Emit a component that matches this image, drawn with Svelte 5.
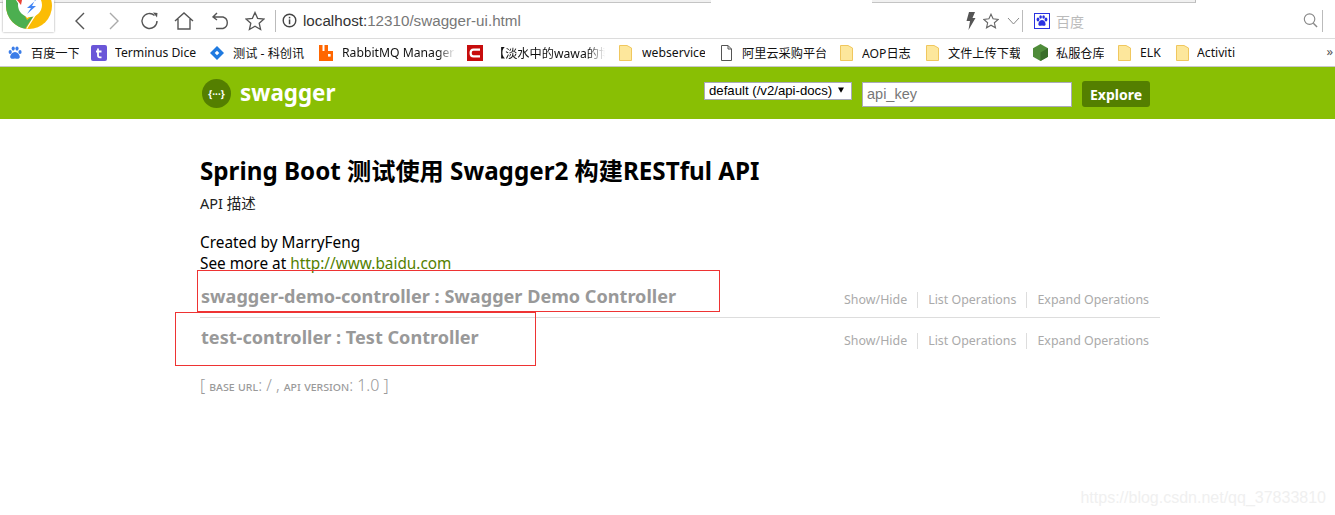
<script>
  const tabs = [225, 162, 159, 165, 161, 161, 162];
  const marks = [
    { t: '百度一下', w: 'baidu', gap: 9, tw: 48, mr: 12 },
    { t: 'Terminus Dice', w: 'term', gap: 8, tw: 82, mr: 12 },
    { t: '测试 - 科创讯', w: 'jira', gap: 8, tw: 73, mr: 12 },
    { t: 'RabbitMQ Manager', w: 'rabbit', gap: 8, tw: 113, mr: 12, fade: true },
    { t: '【淡水中的wawa的博', w: 'red', gap: 10, tw: 112, mr: 14, fade: true },
    { t: 'webservice', w: 'folder', gap: 10, tw: 63, mr: 16 },
    { t: '阿里云采购平台', w: 'page', gap: 10, tw: 84, mr: 14 },
    { t: 'AOP日志', w: 'folder', gap: 9, tw: 50, mr: 14 },
    { t: '文件上传下载', w: 'folder', gap: 9, tw: 72, mr: 13 },
    { t: '私服仓库', w: 'cube', gap: 8, tw: 48, mr: 14 },
    { t: 'ELK', w: 'folder', gap: 9, tw: 21, mr: 15 },
    { t: 'Activiti', w: 'folder', gap: 8, tw: 40, mr: 0 }
  ];
  const ctrls = [
    { name: 'swagger-demo-controller', desc: 'Swagger Demo Controller', line: true },
    { name: 'test-controller', desc: 'Test Controller', line: false }
  ];
</script>

<div class="page">
  <div class="tabstrip">
    {#each tabs as w, i}
      <div class="tab" class:active={i === 4} style="width:{w}px"></div>
    {/each}
  </div>

  <div class="toolbar">
    <svg class="nav first" width="16" height="20" viewBox="0 0 16 20"><path d="M12 2 L4 10 L12 18" fill="none" stroke="#555" stroke-width="1.4"/></svg>
    <svg class="nav" width="16" height="20" viewBox="0 0 16 20"><path d="M4 2 L12 10 L4 18" fill="none" stroke="#aaa" stroke-width="1.4"/></svg>
    <svg class="nav" width="20" height="20" viewBox="0 0 20 20"><path d="M17 10 A7.5 7.5 0 1 1 14.5 4.4" fill="none" stroke="#555" stroke-width="1.4"/><path d="M13 1.5 L17.5 2 L17 6.5 Z" fill="#555"/></svg>
    <svg class="nav home" width="20" height="20" viewBox="0 0 20 20"><path d="M1 10 L10 2 L19 10 M4 8 V18 H16 V8" fill="none" stroke="#555" stroke-width="1.4"/></svg>
    <svg class="nav undo" width="20" height="20" viewBox="0 0 20 20"><path d="M6 2 L2 6 L6 9 M2 6 H12 A6 6 0 0 1 12 17.5 H5" fill="none" stroke="#555" stroke-width="1.4"/></svg>
    <svg class="nav home" width="20" height="20" viewBox="0 0 20 20"><path d="M10 1.5 L12.6 7.3 L19 8 L14.2 12.2 L15.6 18.5 L10 15.2 L4.4 18.5 L5.8 12.2 L1 8 L7.4 7.3 Z" fill="none" stroke="#555" stroke-width="1.3"/></svg>
    <span class="vline"></span>
    <svg class="info" width="15" height="15" viewBox="0 0 15 15"><circle cx="7.5" cy="7.5" r="6.3" fill="none" stroke="#444" stroke-width="1.4"/><rect x="6.8" y="6.4" width="1.5" height="4.8" fill="#444"/><rect x="6.8" y="3.8" width="1.5" height="1.6" fill="#444"/></svg>
    <span class="url"><span class="host">localhost:</span>12310/swagger-ui.html</span>
    <svg width="10" height="20" viewBox="0 0 10 20"><path d="M3 1 H9 L6.5 7 H9.5 L2.5 19 L4 10 H0.5 Z" fill="#555"/></svg>
    <svg class="star" width="16" height="16" viewBox="0 0 20 20"><path d="M10 1.5 L12.6 7.3 L19 8 L14.2 12.2 L15.6 18.5 L10 15.2 L4.4 18.5 L5.8 12.2 L1 8 L7.4 7.3 Z" fill="none" stroke="#666" stroke-width="1.4"/></svg>
    <svg class="chev" width="13" height="8" viewBox="0 0 13 8"><path d="M1 1 L6.5 7 L12 1" fill="none" stroke="#888" stroke-width="1"/></svg>
    <span class="vline two"></span>
    <svg class="paw" width="16" height="16" viewBox="0 0 16 16"><rect x=".5" y=".5" width="15" height="15" fill="#fff" stroke="#2932e1"/><g fill="#2932e1"><ellipse cx="4" cy="6.5" rx="1.4" ry="1.9"/><ellipse cx="6.6" cy="4" rx="1.3" ry="1.8"/><ellipse cx="9.6" cy="4" rx="1.3" ry="1.8"/><ellipse cx="12" cy="6.5" rx="1.4" ry="1.9"/><path d="M8 7 C5.5 7 4 10 4.5 12 C5.5 13.5 7 12.5 8 12.5 C9 12.5 10.5 13.5 11.5 12 C12 10 10.5 7 8 7 Z"/></g></svg>
    <span class="engine">百度</span>
    <span class="grow"></span>
    <svg class="search" width="15" height="17" viewBox="0 0 16 18"><circle cx="7" cy="7.5" r="5.6" fill="none" stroke="#888" stroke-width="1.2"/><path d="M11 12 L15 16" stroke="#888" stroke-width="1.5"/></svg>
    <span class="vline three"></span>
  </div>

  <div class="bookmarks">
    {#each marks as m}
      <div class="mark" style="gap:{m.gap}px;margin-right:{m.mr}px">
        {#if m.w === 'baidu'}
          <svg width="14" height="14" viewBox="0 0 14 14"><g fill="#3b7de8"><ellipse cx="2.2" cy="6" rx="1.6" ry="2"/><ellipse cx="5.2" cy="2.6" rx="1.6" ry="2.1"/><ellipse cx="9" cy="2.6" rx="1.6" ry="2.1"/><ellipse cx="12" cy="6" rx="1.6" ry="2"/><path d="M7 6 C4.5 6 2 9 2.2 11.2 C3 13.6 5.5 12.5 7 12.5 C8.5 12.5 11 13.6 11.8 11.2 C12 9 9.5 6 7 6 Z"/></g></svg>
        {:else if m.w === 'term'}
          <svg width="16" height="16" viewBox="0 0 16 16"><rect width="16" height="16" rx="2" fill="#6a56d8"/><path d="M7 3.5 V10.5 Q7 12.3 9 12.3 H10.5 M5 6.5 H10.5" fill="none" stroke="#fff" stroke-width="1.8"/></svg>
        {:else if m.w === 'jira'}
          <svg width="16" height="16" viewBox="0 0 16 16"><path d="M8 1 L15 8 L8 15 L1 8 Z" fill="#1f7ae0"/><path d="M8 5.7 L10.3 8 L8 10.3 L5.7 8 Z" fill="#fff"/></svg>
        {:else if m.w === 'rabbit'}
          <svg width="16" height="17" viewBox="0 0 16 17"><path d="M1 1 H4.5 V7 H6.5 V1 H10 V7 H15 V17 H1 Z" fill="#ff6600"/><rect x="10" y="10" width="2.6" height="2.6" fill="#fff"/></svg>
        {:else if m.w === 'red'}
          <svg width="16" height="16" viewBox="0 0 16 16"><rect width="16" height="16" fill="#c70d0d"/><path d="M13 4.6 H6.5 Q3.6 4.6 3.6 8 Q3.6 11.4 6.5 11.4 H13" fill="none" stroke="#fff" stroke-width="2.2"/></svg>
        {:else if m.w === 'folder'}
          <svg width="13" height="16" viewBox="0 0 13 16"><path d="M.5 .5 H8 L12.5 3 V15.5 H.5 Z" fill="#fde79c" stroke="#f0c75e"/></svg>
        {:else if m.w === 'page'}
          <svg width="11" height="16" viewBox="0 0 11 16"><path d="M.5 .5 H7 L10.5 4 V15.5 H.5 Z M7 .5 V4 H10.5" fill="#fff" stroke="#555"/></svg>
        {:else}
          <svg width="15" height="17" viewBox="0 0 15 17"><path d="M7.5 0 L15 4.2 V12.8 L7.5 17 L0 12.8 V4.2 Z" fill="#4f8c3a"/><path d="M7.5 8.5 L15 4.2 V12.8 L7.5 17 Z" fill="#3a6e2b"/></svg>
        {/if}
        <span class="mtext" class:fade={m.fade} style="width:{m.tw}px">{m.t}</span>
      </div>
    {/each}
    <span class="more">»</span>
  </div>

  <header class="swagger-bar">
    <div class="brand">
      <svg width="29" height="29" viewBox="0 0 29 29"><circle cx="14.5" cy="14.5" r="14.5" fill="#547f00"/><text x="14.5" y="18.5" text-anchor="middle" fill="#fff" class="logo-glyph">{'{···}'}</text></svg>
      <span class="brand-name">swagger</span>
    </div>
    <div class="api-form">
      <div class="select"><span>default (/v2/api-docs)</span><svg width="6" height="6" viewBox="0 0 8 7"><path d="M0 0 H8 L4 7 Z" fill="#000"/></svg></div>
      <input class="key" placeholder="api_key" />
      <button class="explore">Explore</button>
    </div>
  </header>

  <main class="content">
    <h1>Spring Boot 测试使用 Swagger2 构建RESTful API</h1>
    <p class="desc">API 描述</p>
    <p class="contact">Created by MarryFeng<br />See more at <a href="#top">http://www.baidu.com</a></p>

    {#each ctrls as c}
      <section class="res" class:line={c.line}>
        <h2>{c.name} : {c.desc}</h2>
        <nav>
          <span>Show/Hide</span><span>List Operations</span><span>Expand Operations</span>
        </nav>
      </section>
    {/each}

    <p class="base">[ <span class="sc">base url</span>: / , <span class="sc">api version</span>: 1.0 ]</p>
  </main>

  <div class="red one"></div>
  <div class="red two"></div>
  <svg class="chrome" width="51" height="32" viewBox="0 0 51 32">
    <rect width="51" height="32" fill="#fff"/>
    <circle cx="26" cy="6" r="23" fill="#fbbc05"/>
    <path d="M24 29 A23 23 0 0 1 3 6 V-2 H13 L24 20 L32 14 L22 29 Z" fill="#4caf50"/>
    <path d="M13 0 H24 L27 14 L33 15 L24 29 L23.5 28 L32 14 L24 18 Z" fill="#fff"/>
    <circle cx="27" cy="5" r="12" fill="#fff"/>
    <path d="M14 0 H19 L18 5 Z" fill="#ea4335"/>
    <path d="M33 0 L24 8 H28 L24 14 L33 6 H29 L32 0 Z" fill="#4285f4"/>
  </svg>
  <div class="mark-wm">https://blog.csdn.net/qq_37833810</div>
</div>

<style>
  :global(body) { margin: 0; background: #fff; }
  .page { width: 1335px; height: 515px; position: relative; overflow: hidden; font-family: "Noto Sans", "Noto Sans CJK SC", sans-serif; }
  .tabstrip { height: 3px; display: flex; background: #fff; }
  .tab { height: 2px; background: #f1f1f1; border-right: 1px solid #bbb; border-bottom: 1px solid #c4c4c4; box-sizing: content-box; margin-right: -1px; }
  .tab.active { background: #fff; border-bottom-color: #fff; }
  .toolbar { height: 35px; display: flex; align-items: center; border-bottom: 1px solid #dcdcdc; box-sizing: content-box; background: #fff; }
  .nav { margin-left: 18px; flex: none; }
  .nav.first { margin-left: 72px; }
  .nav.home { margin-left: 14px; }
  .nav.undo { margin-left: 17px; }
  .vline { width: 1px; height: 22px; background: #bbb; margin-left: 10px; flex: none; }
  .info { margin-left: 6px; flex: none; }
  .url { margin-left: 6px; width: 663px; flex: none; font: 15.2px "Liberation Sans", sans-serif; color: #777; white-space: nowrap; }
  .host { color: #333; }
  .grow { flex: 1; }
  .star { margin-left: 7px; }
  .chev { margin-left: 8px; }
  .vline.two { margin-left: 2px; }
  .paw { margin-left: 11px; }
  .engine { margin-left: 6px; font: 14px "Noto Sans CJK SC", sans-serif; color: #bbb; }
  .vline.three { margin-left: 4px; margin-right: 12px; }
  .bookmarks { height: 27px; display: flex; align-items: center; padding-left: 8px; background: #fff; border-bottom: 1px solid #c9c9c9; font-size: 12px; color: #111; position: relative; }
  .mark { display: flex; align-items: center; flex: none; }
  .mtext { white-space: nowrap; overflow: hidden; font-family: "Noto Sans", "Noto Sans CJK SC", sans-serif; font-size: 12.2px; display: block; }
  .fade { -webkit-mask-image: linear-gradient(90deg, #000 85%, transparent); mask-image: linear-gradient(90deg, #000 85%, transparent); }
  .more { position: absolute; right: 2px; top: 3px; color: #555; font-size: 13px; }
  .swagger-bar { height: 52px; background: #89bf04; display: flex; align-items: center; padding-left: 202px; }
  .brand { display: flex; align-items: center; gap: 9px; width: 502px; flex: none; }
  .logo-glyph { font: 700 10px "Noto Sans", sans-serif; }
  .brand-name { font-size: 22.4px; font-weight: 700; color: #fff; line-height: 28px; margin-top: -1px; }
  .api-form { display: flex; align-items: flex-start; height: 26px; margin-top: 2px; }
  .select { width: 148px; height: 18px; margin-top: 1px; box-sizing: border-box; background: #fff; border: 1px solid #aab; display: flex; align-items: center; justify-content: space-between; padding: 0 7px 2px 4px; font: 13.2px "Liberation Sans", sans-serif; color: #000; }
  .select span { white-space: nowrap; }
  .key { width: 210px; height: 25px; margin: 1px 0 0 10px; padding: 0 4px 1px; box-sizing: border-box; border: 1px solid #aab; font: 14.5px "Liberation Sans", sans-serif; background: #fff; outline: none; }
  .key::placeholder { color: #777; opacity: 1; }
  .explore { margin-left: 10px; width: 68px; height: 26px; border: 0; padding: 0; border-radius: 3px; background: #547f00; color: #fff; font: 700 14px "Noto Sans", sans-serif; }
  .content { width: 960px; margin-left: 200px; }
  h1 { margin: 36px 0 0; font-size: 24.2px; line-height: 32px; font-weight: 700; color: #000; white-space: nowrap; }
  .desc { margin: 6px 0 0; font-size: 14.5px; line-height: 20px; color: #222; }
  .contact { margin: 19px 0 0; font-size: 15.35px; line-height: 21px; color: #000; }
  .contact a { color: #547f00; text-decoration: none; }
  .res { height: 41px; display: flex; justify-content: space-between; align-items: flex-start; box-sizing: border-box; }
  .res.line { border-bottom: 1px solid #ddd; margin-top: 1px; height: 43px; }
  h2 { margin: 6px 0 0 1px; font-size: 18.1px; line-height: 26px; font-weight: 700; color: #999; white-space: nowrap; }
  .res.line h2 { margin-top: 8px; }
  nav { display: flex; margin: 15px 11px 0 0; font-size: 12.42px; line-height: 16px; color: #aaa; }
  .res.line nav { margin-top: 17px; }
  nav span { padding: 0 10px; border-left: 1px solid #ddd; }
  nav span:first-child { border-left: 0; }
  nav span:last-child { padding-right: 0; }
  .base { margin: 16px 0 0; font-size: 16px; font-weight: 300; line-height: 20px; color: #999; }
  .sc { font-variant: small-caps; font-size: 13px; font-weight: 400; color: #999; }
  .red { position: absolute; border: 1px solid #e33; box-sizing: border-box; }
  .red.one { left: 197px; top: 270px; width: 523px; height: 42px; }
  .red.two { left: 175px; top: 312px; width: 361px; height: 54px; }
  .chrome { position: absolute; left: 3px; top: 0; box-shadow: 0 0 2px #999; }
  .mark-wm { position: absolute; right: 9px; bottom: 8px; font: 16px "Liberation Sans", sans-serif; color: #f0f0f0; }
</style>
